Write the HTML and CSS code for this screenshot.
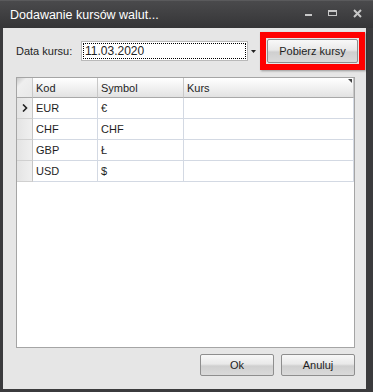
FILE: index.html
```html
<!DOCTYPE html>
<html lang="pl">
<head>
    <meta charset="UTF-8">
    <title>Dodawanie kursów walut...</title>
    <link rel="stylesheet" href="styles.css">
</head>
<body>
<div class="window">
    <div class="titleBar">
        <div class="titleText">Dodawanie kursów walut...</div>
        <div class="titleButtons">
            <svg width="10" height="10" viewBox="0 0 10 10"><rect x="1" y="6" width="7" height="2" fill="#c8c8c8"/></svg>
            <svg width="12" height="10" viewBox="0 0 12 10"><rect x="1.5" y="2.5" width="8" height="5" fill="none" stroke="#c8c8c8"/><rect x="1" y="2" width="9" height="2" fill="#c8c8c8"/></svg>
            <svg width="12" height="10" viewBox="0 0 12 10"><path d="M2 2 L9 9 M9 2 L2 9" stroke="#c8c8c8" stroke-width="2"/></svg>
        </div>
    </div>
    <div class="client">
        <div class="topRow">
            <div class="dateCaption">Data kursu:</div>
            <div class="comboBox">
                <div class="comboText">11.03.2020</div>
            </div>
            <div class="comboArrow">
                <svg width="5" height="3" viewBox="0 0 5 3"><path d="M0 0 L5 0 L2.5 3 Z" fill="#222"/></svg>
            </div>
            <div class="highlight">
                <div class="button fetchButton">Pobierz kursy</div>
            </div>
        </div>
        <div class="grid">
            <div class="gridRow headRow">
                <div class="cell rowHead cornerCell"></div>
                <div class="cell colKod">Kod</div>
                <div class="cell colSymbol">Symbol</div>
                <div class="cell colKurs">Kurs<span class="cornerMark"></span></div>
            </div>
            <div class="gridRow">
                <div class="cell rowHead"><svg width="6" height="8" viewBox="0 0 6 8"><path d="M1 0.5 L4.5 4 L1 7.5" fill="none" stroke="#222" stroke-width="1.6"/></svg></div>
                <div class="cell colKod">EUR</div>
                <div class="cell colSymbol">€</div>
                <div class="cell colKurs"></div>
            </div>
            <div class="gridRow">
                <div class="cell rowHead"></div>
                <div class="cell colKod">CHF</div>
                <div class="cell colSymbol">CHF</div>
                <div class="cell colKurs"></div>
            </div>
            <div class="gridRow">
                <div class="cell rowHead"></div>
                <div class="cell colKod">GBP</div>
                <div class="cell colSymbol">Ł</div>
                <div class="cell colKurs"></div>
            </div>
            <div class="gridRow">
                <div class="cell rowHead"></div>
                <div class="cell colKod">USD</div>
                <div class="cell colSymbol">$</div>
                <div class="cell colKurs"></div>
            </div>
        </div>
        <div class="bottomRow">
            <div class="button dialogButton">Ok</div>
            <div class="button dialogButton">Anuluj</div>
        </div>
    </div>
</div>
</body>
</html>
```

FILE: styles.css
```css
body{
    margin: 0;
    font-family: "Liberation Sans", Arial, sans-serif;
    font-size: 11px;
    color: #1e1e1e;
}
.window{
    width: 373px;
    height: 392px;
    box-sizing: border-box;
    display: flex;
    flex-direction: column;
    background: #3b3b3d;
    border-top: 1px solid #5a5a5c;
}
.titleBar{
    height: 27px;
    display: flex;
    align-items: center;
    justify-content: space-between;
    background: linear-gradient(#4a4a4c, #353537);
}
.titleText{
    color: #ffffff;
    font-size: 12.5px;
    padding-left: 10px;
    padding-top: 1px;
}
.titleButtons{
    display: flex;
    gap: 13px;
    padding-right: 9px;
    padding-bottom: 4px;
    align-items: center;
}
.client{
    flex: 1;
    margin: 0 7px 3px 3px;
    background: #e6e6e6;
    padding: 4px 11px 13px 13px;
    display: flex;
    flex-direction: column;
}
.topRow{
    display: flex;
    align-items: center;
    height: 38px;
}
.dateCaption{
    width: 65px;
}
.comboBox{
    width: 167px;
    height: 20px;
    box-sizing: border-box;
    border: 1px solid #b9b9b9;
    background: #ffffff;
    padding: 1px;
}
.comboText{
    height: 16px;
    box-sizing: border-box;
    border: 1px dotted #000000;
    line-height: 14px;
    padding-left: 1px;
    font-size: 12px;
}
.comboArrow{
    width: 10px;
    display: flex;
    justify-content: center;
}
.highlight{
    margin-left: auto;
    margin-right: -10px;
    border: 6px solid #ff0000;
    padding: 1px;
    box-shadow: 1px 1px 2px rgba(0,0,0,0.35);
}
.button{
    box-sizing: border-box;
    border: 1px solid #8e8e8e;
    border-radius: 2px;
    background: linear-gradient(#f8f8f8 0%, #e9e9e9 45%, #cfcfcf 55%, #dadada 100%);
    display: flex;
    align-items: center;
    justify-content: center;
    font-size: 11px;
}
.fetchButton{
    width: 91px;
    height: 24px;
}
.grid{
    margin-top: 7px;
    height: 271px;
    box-sizing: border-box;
    border: 1px solid #a5a5a5;
    background: #ffffff;
}
.gridRow{
    display: flex;
    height: 21px;
}
.headRow{
    height: 20px;
}
.cell{
    box-sizing: border-box;
    border-right: 1px solid #d3d9e3;
    border-bottom: 1px solid #d3d9e3;
    padding-left: 3px;
    display: flex;
    align-items: center;
    font-size: 11px;
}
.rowHead{
    width: 16px;
    padding-left: 5px;
    background: linear-gradient(90deg, #e4e4e4, #f0f0f0);
    border-right: 1px solid #c6c6c6;
    border-bottom: 1px solid #d0d0d0;
}
.headRow .cell{
    background: linear-gradient(#ffffff, #f1f1f1 50%, #e2e2e2);
    border-right: 1px solid #c8c8c8;
    border-bottom: 1px solid #a8a8a8;
}
.headRow .cornerCell{
    background: linear-gradient(135deg, #c9c9c9 0, #efefef 30%, #e8e8e8);
}
.colKod{
    width: 65px;
}
.colSymbol{
    width: 86px;
}
.colKurs{
    flex: 1;
    position: relative;
}
.cornerMark{
    position: absolute;
    right: 1px;
    top: 1px;
    border-top: 4px solid #444;
    border-left: 4px solid transparent;
}
.bottomRow{
    margin-top: 6px;
    display: flex;
    justify-content: flex-end;
    gap: 7px;
}
.dialogButton{
    width: 74px;
    height: 22px;
}
```
